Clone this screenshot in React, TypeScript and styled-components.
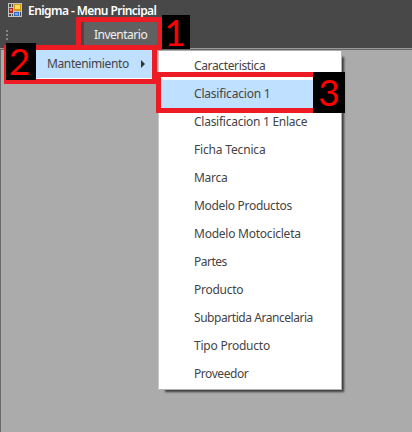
import React from 'react';
import styled, { createGlobalStyle } from 'styled-components';

const GlobalStyle = createGlobalStyle`
  * { box-sizing: border-box; }
  body { margin: 0; background: #ababab; overflow: hidden; }
`;

const Window = styled.div`
  position: relative;
  width: 412px;
  height: 432px;
  overflow: hidden;
  display: flex;
  flex-direction: column;
  background: #ababab;
  color: #444;
  font: 12px/28px 'Noto Sans', 'Open Sans', sans-serif;
  white-space: nowrap;
`;

const Header = styled.header`
  flex: none;
  height: 50px;
  background: #484848;
  border-bottom: 1px solid #666;
  box-shadow: inset 0 -1px #999;
`;

const TitleBar = styled.div`
  height: 21px;
  display: flex;
  align-items: center;
  gap: 6px;
  padding-left: 8px;
  color: #fff;
  font-weight: 600;
  line-height: 21px;

  svg { flex: none; margin-top: -1px; }
`;

const Title = styled.span`
  letter-spacing: -0.57px;
`;

const MenuBar = styled.nav`
  height: 27px;
  display: flex;
  align-items: flex-start;
`;

const Grip = styled.div`
  width: 84px;
  height: 27px;
  padding: 9px 0 0 6px;

  svg { display: block; }
`;

const MenuButton = styled.div`
  width: 73px;
  height: 27px;
  padding-left: 10px;
  background: #616161;
  color: #f2f2f2;
  letter-spacing: -0.5px;
`;

const Workspace = styled.main`
  flex: 1;
  display: flex;
  align-items: flex-start;
  border-left: 1px solid #6a6a6a;
`;

const ParentMenu = styled.div`
  width: 147px;
  margin: 0 7px 0 4px;
  background: #fff;
  padding-bottom: 1px;
`;

const ParentItem = styled.div`
  height: 28px;
  display: flex;
  align-items: center;
  justify-content: space-between;
  padding: 0 7px 0 42px;
  background: #c0e0ff;
  letter-spacing: -0.38px;
`;

const SubMenu = styled.div`
  width: 183px;
  height: 339px;
  margin-top: 1px;
  padding-top: 1px;
  background: #fff;
  border-right: 1px solid #b4b4b4;
  border-bottom: 1px solid #b4b4b4;
  box-shadow: -1px 0 #c8c8c8, 4px 4px 2px -2px rgba(0, 0, 0, 0.65);
`;

const MenuItem = styled.div<{ $active?: boolean; $spacing: number }>`
  height: 28px;
  padding-left: 35px;
  background: ${({ $active }) => ($active ? '#c0e0ff' : 'transparent')};
  letter-spacing: ${({ $spacing }) => $spacing}px;
`;

type Box = { $x: number; $y: number; $w: number; $h: number };

const Outline = styled.div<Box>`
  position: absolute;
  left: ${({ $x }) => $x}px;
  top: ${({ $y }) => $y}px;
  width: ${({ $w }) => $w}px;
  height: ${({ $h }) => $h}px;
  border: 5px solid #ed1c24;
`;

const Badge = styled.div<Box & { $shift?: number }>`
  position: absolute;
  left: ${({ $x }) => $x}px;
  top: ${({ $y }) => $y}px;
  width: ${({ $w }) => $w}px;
  height: ${({ $h }) => $h}px;
  display: flex;
  align-items: center;
  justify-content: center;
  padding: 0 ${({ $shift = 0 }) => $shift}px 2px 0;
  background: #000;
  color: #f00;
  font-family: Lato, sans-serif;
  font-size: 37px;
  line-height: 1;
`;

const items = [
  { label: 'Caracteristica', spacing: -0.36 },
  { label: 'Clasificacion 1', spacing: -0.2, active: true },
  { label: 'Clasificacion 1 Enlace', spacing: -0.26 },
  { label: 'Ficha Tecnica', spacing: -0.17 },
  { label: 'Marca', spacing: -0.3 },
  { label: 'Modelo Productos', spacing: -0.31 },
  { label: 'Modelo Motocicleta', spacing: -0.24 },
  { label: 'Partes', spacing: -0.5 },
  { label: 'Producto', spacing: -0.25 },
  { label: 'Subpartida Arancelaria', spacing: -0.45 },
  { label: 'Tipo Producto', spacing: -0.23 },
  { label: 'Proveedor', spacing: -0.44 },
];

const AppIcon = () => (
  <svg width="14" height="14" viewBox="0 0 14 14" shapeRendering="crispEdges">
    <path fill="#c4c4c4" d="M0 0h14v14H0z" />
    <path fill="#4a4a4a" d="M1 1h2v3H1zM4 1h1v3H4zM1 11h2v2H1zM4 11h1v2H4zM12 9h1v4h-1z" />
    <path fill="#b3241c" d="M1 5h4v5H1z" />
    <path fill="#f0877a" d="M2 6h2v2H2z" />
    <path fill="#d39a18" d="M6 1h7v7H6z" />
    <path fill="#ffdc5e" d="M7 2h5v4H7z" />
    <path fill="#3569c8" d="M6 9h5v4H6z" />
    <path fill="#7aaaf5" d="M7 10h3v2H7z" />
  </svg>
);

export default function App() {
  return (
    <Window>
      <GlobalStyle />
      <Header>
        <TitleBar>
          <AppIcon />
          <Title>Enigma - Menu Principal</Title>
        </TitleBar>
        <MenuBar>
          <Grip>
            <svg width="2" height="10" viewBox="0 0 2 10">
              <path fill="#858585" d="M0 0h2v2H0zM0 4h2v2H0zM0 8h2v2H0z" />
            </svg>
          </Grip>
          <MenuButton>Inventario</MenuButton>
        </MenuBar>
      </Header>
      <Workspace>
        <ParentMenu>
          <ParentItem>
            <span>Mantenimiento</span>
            <svg width="4" height="8" viewBox="0 0 4 8"><path d="M0 0l4 4-4 4z" fill="#333" /></svg>
          </ParentItem>
        </ParentMenu>
        <SubMenu>
          {items.map((item) => (
            <MenuItem key={item.label} $active={item.active} $spacing={item.spacing}>
              {item.label}
            </MenuItem>
          ))}
        </SubMenu>
      </Workspace>
      <Outline $x={76} $y={17} $w={86} $h={33} />
      <Outline $x={4} $y={45} $w={153} $h={39} />
      <Outline $x={156} $y={72} $w={162} $h={41} />
      <Badge $x={162} $y={15} $w={28} $h={34} $shift={2}>1</Badge>
      <Badge $x={6} $y={43} $w={30} $h={37} $shift={3}>2</Badge>
      <Badge $x={313} $y={72} $w={32} $h={41}>3</Badge>
    </Window>
  );
}
